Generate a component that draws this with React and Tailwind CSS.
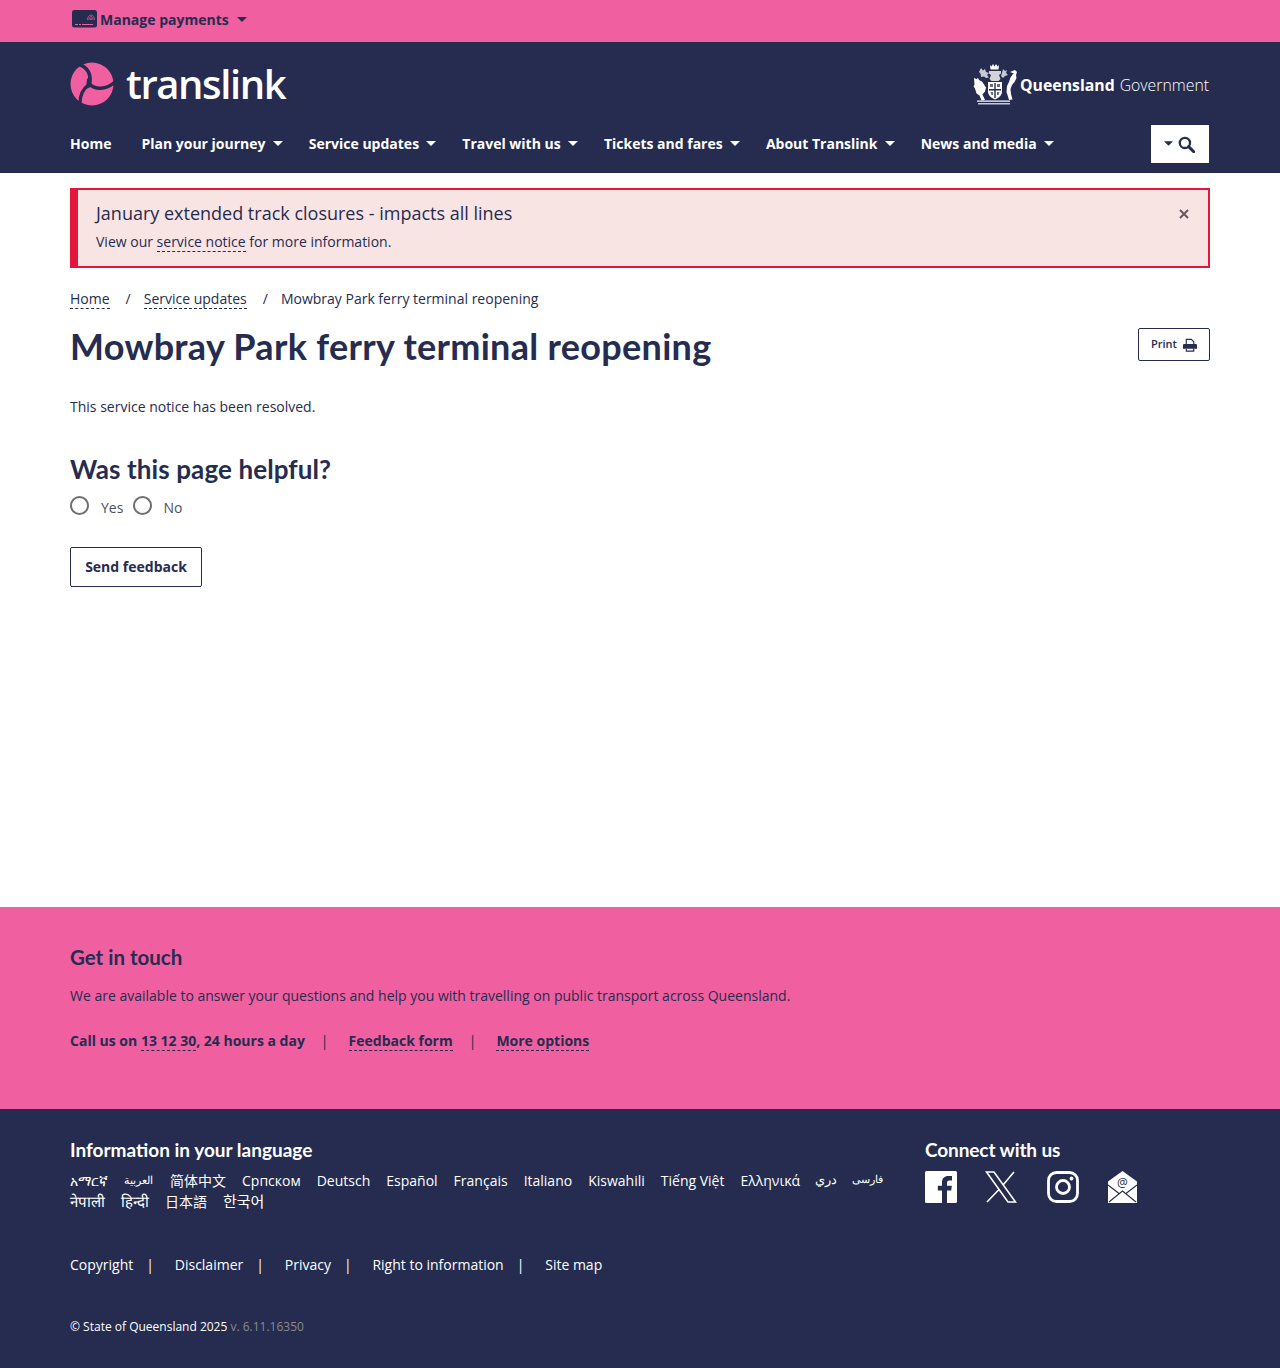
const body = "font-['Open_Sans','Noto_Sans_CJK_SC',sans-serif]";
const head = "font-['Lato','Open_Sans',sans-serif]";

const navItems = [
  { label: "Plan your journey" },
  { label: "Service updates" },
  { label: "Travel with us" },
  { label: "Tickets and fares" },
  { label: "About Translink" },
  { label: "News and media" },
];

const languagesOne = [
  { label: "አማርኛ" },
  { label: "العربية", size: "text-[11px] mr-[1px]" },
  { label: "简体中文" },
  { label: "Српском" },
  { label: "Deutsch" },
  { label: "Español" },
  { label: "Français" },
  { label: "Italiano" },
  { label: "Kiswahili" },
  { label: "Tiếng Việt" },
  { label: "Ελληνικά" },
  { label: "دري", size: "text-[12.500px] -ml-[1px]" },
  { label: "فارسی", size: "text-[10.500px] -ml-[1px]" },
];

const languagesTwo = [
  { label: "नेपाली", size: "text-[15px]" },
  { label: "हिन्दी", size: "text-[15px]" },
  { label: "日本語" },
  { label: "한국어", size: "text-[15px]" },
];

const footerLinks = ["Copyright", "Disclaimer", "Privacy", "Right to information", "Site map"];

function Caret({ className }) {
  return (
    <svg viewBox="0 0 10 5" className={className} fill="currentColor">
      <path d="M0 0h10L5 5z" />
    </svg>
  );
}

function Dashed({ children }) {
  return <a className="border-b border-dashed border-[#252c4f] leading-[19px]">{children}</a>;
}

function TranslinkMark() {
  return (
    <svg viewBox="0 0 44 44" className="w-[44px] h-[44px]">
      <circle cx="22" cy="22" r="21.500" fill="#f060a0" />
      <g fill="none" stroke="#252c4f" strokeLinecap="round">
        <path d="M9 2.500C17 5 21.500 12 19.500 22" strokeWidth="3.800" />
        <path d="M19.500 22C14 26 10 32 10 41" strokeWidth="3.400" />
        <path d="M19.500 22C25 28 36 28 45 20" strokeWidth="3.400" />
      </g>
      <path d="M17 16l6 8-7 3z" fill="#252c4f" />
    </svg>
  );
}

function Crest() {
  return (
    <svg viewBox="0 0 44 42" className="w-[44px] h-[42px]" fill="#fff">
      {/* crown and mantling */}
      <path d="M17 2l1.500 1.500L20 1l1.500 2.500L23 1l1.500 2.500L26 2l-.5 4.500h-8z" />
      <path d="M16 8h12v2.500l-2 1.500 1.500 4-2 2h-7l-2-2 1.500-4-2-1.500z" opacity=".8" />
      <path d="M8 5l2 2.500L12 6l1 3 3 1-2 2 2 2.500-3 .5-2-1.500-3 .5-.5-3.500L6 9z" opacity=".75" />
      <path d="M30 6l2 2 2-1-1 3 2 2-3 1-2 2-2-2 1-3z" opacity=".75" />
      {/* left lion */}
      <path transform="translate(-3 0)" d="M4 15l2.500 1 1.500-1 1 2 3 1.500 2 3 2 3-1 4-2.500 3 2.500 5.500-3.500.5-2-5-3-2-1.500-5-1.500-2 1-2z" />
      {/* right brolga */}
      <path d="M44 9l-1 3 .5 3-2 4-2.500 3-1.500 4 .5 5 1.500 5.500-3.500.5-1.500-5-1-3 .5-6 2-4 1.500-4.500 2.500-3.500z" />
      <path d="M37 9l5-2 2 2-2 2z" />
      {/* shield */}
      <path d="M15 19h14v9.500c0 3.500-3 6.500-7 8-4-1.500-7-4.500-7-8z" />
      <path d="M21.300 20h1.400v15h-1.400zM16 26h12v1.400H16z" fill="#252c4f" />
      <path d="M17 21h3v3h-3zM24 21h3v3h-3zM17.500 29h2.500v3h-1.500zM24 29h2.500l-1 3H24z" fill="#252c4f" opacity=".7" />
      {/* base */}
      <path d="M4 37.500h33v1.300H4z" />
      <path d="M5 40h32v1.500H5z" opacity=".75" />
    </svg>
  );
}

function PaymentCard() {
  return (
    <svg viewBox="0 0 25 18" className="w-[25px] h-[18px]">
      <rect width="25" height="17.500" rx="2.500" fill="#252c4f" />
      <path d="M3 14.500h3M7 14.500h2M10 14.500h11" stroke="#f060a0" strokeWidth="1" />
      <path d="M15.500 10c0-3 1.700-5 3.500-5s3.500 2 3.500 5M17 10c0-2 .9-3.500 2-3.500s2 1.500 2 3.500M18.500 10c0-1 .2-2 .5-2s.5 1 .5 2" stroke="#f060a0" strokeWidth=".7" fill="none" />
    </svg>
  );
}

function SearchGlyph() {
  return (
    <svg viewBox="0 0 16 16" className="w-[17px] h-[17px]" fill="none" stroke="#252c4f">
      <circle cx="6.500" cy="6.500" r="4.800" strokeWidth="2.200" />
      <path d="M10 10l4.800 4.800" strokeWidth="2.800" strokeLinecap="round" />
    </svg>
  );
}

function PrinterGlyph() {
  return (
    <svg viewBox="0 0 15 14" className="w-[14px] h-[14px]">
      <path d="M3.500 6V1h5.500l2.500 2.500V6M3.500 11v2.500h8V11" fill="none" stroke="#252c4f" strokeWidth="1.200" />
      <path d="M1.500 6h12A1.300 1.300 0 0 1 15 7.300V11H0V7.300A1.300 1.300 0 0 1 1.500 6z" fill="#252c4f" />
    </svg>
  );
}

function SocialIcons() {
  return (
    <div className="flex items-center gap-[28px] mt-[9px]">
      <svg viewBox="0 0 32 32" className="w-[32px] h-[32px]">
        <path fill="#fff" d="M1.500 0h29A1.500 1.500 0 0 1 32 1.500v29a1.500 1.500 0 0 1-1.500 1.500H22V19.600h4.200l.6-4.800H22v-3c0-1.400.4-2.400 2.400-2.400H27V5.100c-.5-.1-2-.2-3.700-.2-3.700 0-6.300 2.300-6.300 6.400v3.500h-4.200v4.800H17V32H1.500A1.500 1.500 0 0 1 0 30.500v-29A1.500 1.500 0 0 1 1.500 0z" />
      </svg>
      <svg viewBox="0 0 32 32" className="w-[32px] h-[32px]">
        <path fill="none" stroke="#fff" strokeWidth="1.600" d="M1.500 1h7.500l21.500 30h-7.500z" />
        <path fill="none" stroke="#fff" strokeWidth="1.600" d="M29 1L18 14M14 18.500L2 31" />
      </svg>
      <svg viewBox="0 0 32 32" className="w-[32px] h-[32px] ml-[2px]" fill="none" stroke="#fff">
        <rect x="1.500" y="1.500" width="29" height="29" rx="8" strokeWidth="2.800" />
        <circle cx="16" cy="16" r="6.500" strokeWidth="2.800" />
        <circle cx="24.500" cy="7.500" r="1.900" fill="#fff" stroke="none" />
      </svg>
      <svg viewBox="0 0 29 32" className="w-[29px] h-[32px] ml-[1px]">
        <path fill="#fff" d="M14.500 0L29 10.500V32H0V10.500z" />
        <path fill="none" stroke="#252c4f" strokeWidth="1.100" d="M0 14l11 8.500M29 14l-11 8.500M1 31l13.500-11L28 31" />
        <text x="14.500" y="16" textAnchor="middle" fontSize="12" fill="#252c4f" fontFamily="Open Sans">@</text>
      </svg>
    </div>
  );
}

export default function App() {
  return (
    <div className={`${body} min-h-[1368px] flex flex-col bg-white text-[#252c4f] text-[14px]`}>
      <div className="bg-[#f060a0] h-[42px]">
        <div className="mx-[70px] h-[38px] flex items-center pl-[2px] gap-[3px] font-bold">
          <PaymentCard />
          <span>Manage payments</span>
          <Caret className="w-[10px] h-[5px] ml-[5px]" />
        </div>
      </div>

      <header className="bg-[#252c4f] h-[131px] text-white">
        <div className="mx-[70px] h-[83px] flex items-center justify-between">
          <div className="flex items-center gap-[12px]">
            <TranslinkMark />
            <span className="text-[40px] font-semibold tracking-[-1.400px] leading-none">translink</span>
          </div>
          <div className="flex items-center mr-[1px] gap-[3px]">
            <Crest />
            <span className="text-[15.800px] font-bold mt-[4px]">Queensland</span>
            <span className="text-[15.800px] font-light ml-[2px] mt-[4px]">Government</span>
          </div>
        </div>
        <nav className="mx-[70px] flex items-center justify-between pr-[1px]">
          <div className="flex items-center gap-[30px] font-bold text-[14px] mb-[2px]">
            <a>Home</a>
            <div className="flex items-center gap-[26.200px]">
              {navItems.map((item) => (
                <a key={item.label} className="flex items-center gap-[7px]">
                  {item.label}
                  <Caret className="w-[10px] h-[5px]" />
                </a>
              ))}
            </div>
          </div>
          <button className="w-[58px] h-[38px] bg-white text-[#252c4f] flex items-center justify-center gap-[5px] pr-[2px]">
            <Caret className="w-[9px] h-[5px] mb-[2px]" />
            <SearchGlyph />
          </button>
        </nav>
      </header>

      <main className="flex-1 px-[70px] pt-[15px]">
        <div className="h-[80px] border-2 border-l-[8px] border-[#e4173b] bg-[#f9e4e4] pl-[18px] pr-[19px] flex justify-between">
          <div className="pt-[11px]">
            <p className="text-[18px] leading-[24px]">January extended track closures - impacts all lines</p>
            <p className="mt-[7px] leading-[20px]">
              View our <Dashed>service notice</Dashed> for more information.
            </p>
          </div>
          <span className="pt-[17px] text-[#6b5560]">
            <svg viewBox="0 0 10 10" className="w-[10px] h-[10px] mt-[2px]" stroke="currentColor" strokeWidth="2">
              <path d="M1 1l8 8M9 1l-8 8" />
            </svg>
          </span>
        </div>

        <div className="mt-[21px] flex items-baseline leading-[20px]">
          <Dashed>Home</Dashed>
          <span className="ml-[16px] mr-[13px]">/</span>
          <Dashed>Service updates</Dashed>
          <span className="ml-[16px] mr-[13px]">/</span>
          <span>Mowbray Park ferry terminal reopening</span>
        </div>

        <div className="flex justify-between items-start mt-[19px]">
          <h1 className={`${head} text-[36px] font-bold leading-[36px] tracking-[0.300px]`}>Mowbray Park ferry terminal reopening</h1>
          <button className="w-[72px] h-[33px] border border-[#252c4f] rounded-[2px] flex items-center justify-center gap-[6px] text-[11px] font-semibold">
            Print
            <PrinterGlyph />
          </button>
        </div>

        <p className="mt-[33px] leading-[20px]">This service notice has been resolved.</p>

        <h2 className={`${head} mt-[37px] text-[26px] font-bold leading-[30px] tracking-[0.100px]`}>Was this page helpful?</h2>

        <div className="mt-[11px] flex items-center h-[24px]">
          <span className="w-[19px] h-[19px] rounded-full border-2 border-[#6f6f6f] mb-[4px]" />
          <span className="ml-[12px] text-[#4b4f66]">Yes</span>
          <span className="ml-[10px] w-[19px] h-[19px] rounded-full border-2 border-[#6f6f6f] mb-[4px]" />
          <span className="ml-[11px] text-[#4b4f66]">No</span>
        </div>

        <button className="mt-[28px] w-[132px] h-[40px] border border-[#252c4f] rounded-[2px] font-bold pb-[2px]">Send feedback</button>
      </main>

      <section className="bg-[#f060a0] h-[202px] px-[70px] pt-[37px]">
        <h2 className={`${head} text-[20.500px] font-bold leading-[26px]`}>Get in touch</h2>
        <p className="mt-[16px] leading-[20px]">
          We are available to answer your questions and help you with travelling on public transport across Queensland.
        </p>
        <div className="mt-[25px] flex items-baseline font-bold leading-[20px]">
          <span>
            Call us on <Dashed>13 12 30</Dashed>, 24 hours a day
          </span>
          <span className="ml-[16px] mr-[20px] font-normal">|</span>
          <Dashed>Feedback form</Dashed>
          <span className="ml-[16px] mr-[20px] font-normal">|</span>
          <Dashed>More options</Dashed>
        </div>
      </section>

      <footer className="bg-[#252c4f] h-[259px] px-[70px] pt-[29px] text-white">
        <div className="flex justify-between">
          <div>
            <h2 className={`${head} text-[19px] font-bold leading-[24px]`}>Information in your language</h2>
            <div className="mt-[8px] flex items-center gap-[16px] h-[20px]">
              {languagesOne.map((lang) => (
                <a key={lang.label} className={lang.size}>{lang.label}</a>
              ))}
            </div>
            <div className="mt-[1px] flex items-center gap-[16px] h-[20px]">
              {languagesTwo.map((lang) => (
                <a key={lang.label} className={lang.size}>{lang.label}</a>
              ))}
            </div>
          </div>
          <div className="w-[285px]">
            <h2 className={`${head} text-[19px] font-bold leading-[24px] tracking-[-0.100px]`}>Connect with us</h2>
            <SocialIcons />
          </div>
        </div>

        <div className="mt-[44px] flex items-center leading-[20px]">
          {footerLinks.map((link, i) => (
            <div key={link} className="flex items-center">
              <a>{link}</a>
              {i < footerLinks.length - 1 && <span className="ml-[13px] mr-[20.800px]">|</span>}
            </div>
          ))}
        </div>

        <p className="mt-[42px] text-[12px] leading-[20px]">
          © State of Queensland 2025 <span className="text-[#8a8a8a]">v. 6.11.16350</span>
        </p>
      </footer>
    </div>
  );
}
